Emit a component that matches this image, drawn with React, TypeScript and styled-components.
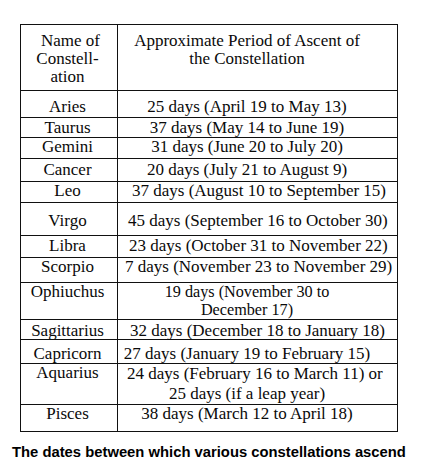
import React from "react";
import styled, { createGlobalStyle } from "styled-components";

const Global = createGlobalStyle`
  html, body { margin: 0; padding: 0; background: #ffffff; }
  body { width: 425px; height: 471px; overflow: hidden; }
`;

const Page = styled.div`
  padding-top: 24px;
  padding-left: 20px;
  font-family: "Liberation Serif", "Times New Roman", serif;
  color: #0a0a0a;
`;

const Table = styled.div`
  width: 378px;
  box-sizing: border-box;
  border: 1px solid #111;
`;

const Row = styled.div<{ $h: number; $first?: boolean }>`
  display: grid;
  grid-template-columns: 97px 1fr;
  box-sizing: border-box;
  height: ${(p) => p.$h}px;
  border-top: ${(p) => (p.$first ? "none" : "1px solid #111")};
`;

const NameCell = styled.div<{ $pt: number }>`
  border-right: 1px solid #111;
  padding-top: ${(p) => p.$pt}px;
  padding-right: 3px;
  font-size: 17px;
  line-height: 17px;
  text-align: center;
  white-space: nowrap;
  overflow: hidden;
`;

const PeriodCell = styled.div<{ $pt: number; $lh: number; $fs: number }>`
  padding-top: ${(p) => p.$pt}px;
  font-size: ${(p) => p.$fs}px;
  line-height: ${(p) => p.$lh}px;
  white-space: nowrap;
  overflow: visible;
`;

const Line = styled.div<{ $indent?: number }>`
  text-align: ${(p) => (p.$indent !== undefined ? "left" : "center")};
  padding-left: ${(p) => (p.$indent !== undefined ? p.$indent : 0)}px;
  padding-right: ${(p) => (p.$indent !== undefined ? 0 : 21)}px;
`;

const HeaderName = styled.div`
  padding-top: 7px;
  line-height: 18px;
`;

const NameLine = styled.div<{ $shift?: number }>`
  padding-left: ${(p) => p.$shift ?? 0}px;
`;

const Caption = styled.div`
  margin-top: 12px;
  margin-left: -8px;
  font-family: "Liberation Sans", Arial, sans-serif;
  font-weight: bold;
  font-size: 14.8px;
  color: #000;
  white-space: nowrap;
`;

type L = { t: string; indent?: number };
type R = { name: string; h: number; pt: number; lines: L[]; fs?: number; lh?: number };

const rows: R[] = [
  { name: "Aries", h: 27, pt: 7, lines: [{ t: "25 days (April 19 to May 13)" }] },
  { name: "Taurus", h: 20, pt: 1, lines: [{ t: "37 days (May 14 to June 19)" }] },
  { name: "Gemini", h: 21, pt: 0, lines: [{ t: "31 days (June 20 to July 20)" }] },
  { name: "Cancer", h: 23, pt: 2, lines: [{ t: "20 days (July 21 to August 9)" }] },
  { name: "Leo", h: 21, pt: 0, lines: [{ t: "37 days (August 10 to September 15)", indent: 14 }] },
  { name: "Virgo", h: 33, pt: 9, lines: [{ t: "45 days (September 16 to October 30)", indent: 10 }] },
  { name: "Libra", h: 22, pt: 1, lines: [{ t: "23 days (October 31 to November 22)", indent: 11 }] },
  { name: "Scorpio", h: 25, pt: 0, lines: [{ t: "7 days (November 23 to November 29)", indent: 7 }] },
  {
    name: "Ophiuchus",
    h: 37,
    pt: 0,
    fs: 16.2,
    lh: 18.2,
    lines: [{ t: "19 days (November 30 to" }, { t: "December 17)" }],
  },
  { name: "Sagittarius", h: 20, pt: 1.5, lines: [{ t: "32 days (December 18 to January 18)", indent: 12 }] },
  { name: "Capricorn", h: 24, pt: 5, lines: [{ t: "27 days (January 19 to February 15)" }] },
  {
    name: "Aquarius",
    h: 41,
    pt: 0,
    lh: 19.5,
    lines: [{ t: "24 days (February 16 to March 11) or", indent: 9 }, { t: "25 days (if a leap year)" }],
  },
  { name: "Pisces", h: 27, pt: 0, lines: [{ t: "38 days (March 12 to April 18)" }] },
];

export default function App() {
  return (
    <>
      <Global />
      <Page>
        <Table>
          <Row $h={65} $first>
            <NameCell $pt={0}>
              <HeaderName>
                <NameLine $shift={6}>Name of</NameLine>
                <NameLine>Constell-</NameLine>
                <NameLine>ation</NameLine>
              </HeaderName>
            </NameCell>
            <PeriodCell $pt={7} $lh={18} $fs={17}>
              <Line>Approximate Period of Ascent of</Line>
              <Line>the Constellation</Line>
            </PeriodCell>
          </Row>
          {rows.map((r) => (
            <Row key={r.name} $h={r.h}>
              <NameCell $pt={r.pt}>{r.name}</NameCell>
              <PeriodCell $pt={r.pt} $lh={r.lh ?? 17} $fs={r.fs ?? 17}>
                {r.lines.map((l, i) => (
                  <Line key={i} $indent={l.indent}>
                    {l.t}
                  </Line>
                ))}
              </PeriodCell>
            </Row>
          ))}
        </Table>
        <Caption>The dates between which various constellations ascend</Caption>
      </Page>
    </>
  );
}
